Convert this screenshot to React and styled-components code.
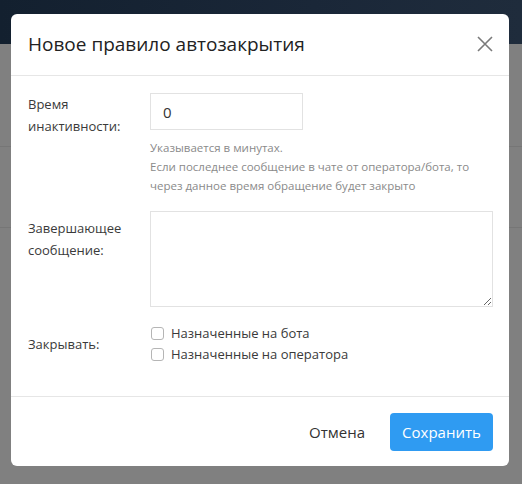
import React, { useState } from 'react';
import styled, { createGlobalStyle } from 'styled-components';

const GlobalStyle = createGlobalStyle`
  html, body {
    margin: 0;
    padding: 0;
    background: #808080;
  }
  body {
    font-family: "Open Sans", "Noto Sans", sans-serif;
    color: #333;
  }
`;

const App = () => {
  const [minutes, setMinutes] = useState('0');
  const [message, setMessage] = useState('');
  const [closeBot, setCloseBot] = useState(false);
  const [closeOperator, setCloseOperator] = useState(false);

  return (
    <Page>
      <GlobalStyle />
      <TopBar />
      <Content>
        <BgRow $height={102} />
        <BgRow $height={80} />
      </Content>

      <Modal>
        <ModalHeader>
          <ModalTitle>Новое правило автозакрытия</ModalTitle>
          <CloseButton aria-label="close">
            <svg width="16" height="16" viewBox="0 0 16 16">
              <path d="M1 1 L15 15 M15 1 L1 15" stroke="#7a7a7a" strokeWidth="1.6" fill="none" />
            </svg>
          </CloseButton>
        </ModalHeader>

        <ModalBody>
          <FormRow>
            <FormLabel>Время<br />инактивности:</FormLabel>
            <FieldColumn>
              <NumberInput value={minutes} onChange={(ev) => setMinutes(ev.target.value)} />
              <Hint $first>Указывается в минутах.</Hint>
              <Hint>
                Если последнее сообщение в чате от оператора/бота, то
                <br />
                через данное время обращение будет закрыто
              </Hint>
            </FieldColumn>
          </FormRow>

          <FormRow>
            <FormLabel $top={6}>Завершающее<br />сообщение:</FormLabel>
            <MessageArea value={message} onChange={(ev) => setMessage(ev.target.value)} />
          </FormRow>

          <FormRow $center>
            <FormLabel>Закрывать:</FormLabel>
            <FieldColumn>
              <CheckRow>
                <CheckBox type="checkbox" checked={closeBot} onChange={() => setCloseBot(!closeBot)} />
                Назначенные на бота
              </CheckRow>
              <CheckRow>
                <CheckBox type="checkbox" checked={closeOperator} onChange={() => setCloseOperator(!closeOperator)} />
                Назначенные на оператора
              </CheckRow>
            </FieldColumn>
          </FormRow>
        </ModalBody>

        <ModalFooter>
          <CancelButton>Отмена</CancelButton>
          <SaveButton>Сохранить</SaveButton>
        </ModalFooter>
      </Modal>
    </Page>
  );
};

export default App;

const Page = styled.div`
  position: relative;
  width: 522px;
  height: 484px;
  overflow: hidden;
  background: #808080;
`;

const TopBar = styled.div`
  height: 44px;
  background: linear-gradient(90deg, #13202f 0%, #1a2738 60%, #1f2c3c 100%);
`;

const Content = styled.div`
  display: flex;
  flex-direction: column;
`;

const BgRow = styled.div`
  height: ${(p) => p.$height}px;
  border-bottom: 1px solid #767676;
`;

const Modal = styled.div`
  position: absolute;
  left: 11px;
  top: 14px;
  width: 498px;
  height: 452px;
  background: #fff;
  border-radius: 6px;
  display: flex;
  flex-direction: column;
  box-sizing: border-box;
`;

const ModalHeader = styled.div`
  height: 62px;
  box-sizing: border-box;
  border-bottom: 1px solid #e6e6e6;
  display: flex;
  align-items: center;
  justify-content: space-between;
  padding: 0 16px 2px 17px;
`;

const ModalTitle = styled.h4`
  margin: 0;
  font-size: 19px;
  font-weight: 500;
  color: #222;
`;

const CloseButton = styled.button`
  border: none;
  background: none;
  padding: 0;
  width: 16px;
  height: 16px;
  display: flex;
  cursor: pointer;
`;

const ModalBody = styled.div`
  flex: 1;
  padding: 17px 16px 0 17px;
  display: flex;
  flex-direction: column;
  gap: 16px;
`;

const FormRow = styled.div`
  display: grid;
  grid-template-columns: 122px 1fr;
  align-items: ${(p) => (p.$center ? 'center' : 'start')};
`;

const FormLabel = styled.label`
  font-size: 13px;
  line-height: 22px;
  color: #3a3a3a;
  padding-top: ${(p) => (p.$top !== undefined ? p.$top : 0)}px;
`;

const FieldColumn = styled.div`
  display: flex;
  flex-direction: column;
`;

const NumberInput = styled.input`
  width: 153px;
  height: 37px;
  box-sizing: border-box;
  border: 1px solid #e2e2e2;
  padding: 0 12px;
  font-family: inherit;
  font-size: 15px;
  color: #333;
  outline: none;
`;

const Hint = styled.div`
  font-size: 11.5px;
  line-height: 19px;
  color: #8a8a8a;
  margin-top: ${(p) => (p.$first ? 8 : 0)}px;
`;

const MessageArea = styled.textarea`
  width: 100%;
  height: 96px;
  box-sizing: border-box;
  border: 1px solid #e2e2e2;
  font-family: inherit;
  font-size: 14px;
  outline: none;
  resize: vertical;
  margin-top: 0;
`;

const CheckRow = styled.label`
  display: flex;
  align-items: center;
  gap: 7px;
  font-size: 13px;
  line-height: 21px;
  color: #3a3a3a;
`;

const CheckBox = styled.input`
  appearance: none;
  width: 13px;
  height: 13px;
  margin: 0 0 0 1px;
  border: 1px solid #b5b5b5;
  border-radius: 3px;
  box-sizing: border-box;
  background: #fff;

  &:checked {
    background: #2f9bf2;
    border-color: #2f9bf2;
  }
`;

const ModalFooter = styled.div`
  border-top: 1px solid #e6e6e6;
  height: 70px;
  box-sizing: border-box;
  display: flex;
  align-items: center;
  justify-content: flex-end;
  padding: 0 16px 0 0;
  gap: 13px;
`;

const CancelButton = styled.button`
  border: none;
  background: none;
  font-family: inherit;
  font-size: 15px;
  color: #333;
  padding: 0 12px;
  height: 38px;
  cursor: pointer;
`;

const SaveButton = styled.button`
  border: none;
  background: #2f9bf2;
  border-radius: 4px;
  font-family: inherit;
  font-size: 15px;
  color: #fff;
  width: 103px;
  height: 38px;
  cursor: pointer;
`;
